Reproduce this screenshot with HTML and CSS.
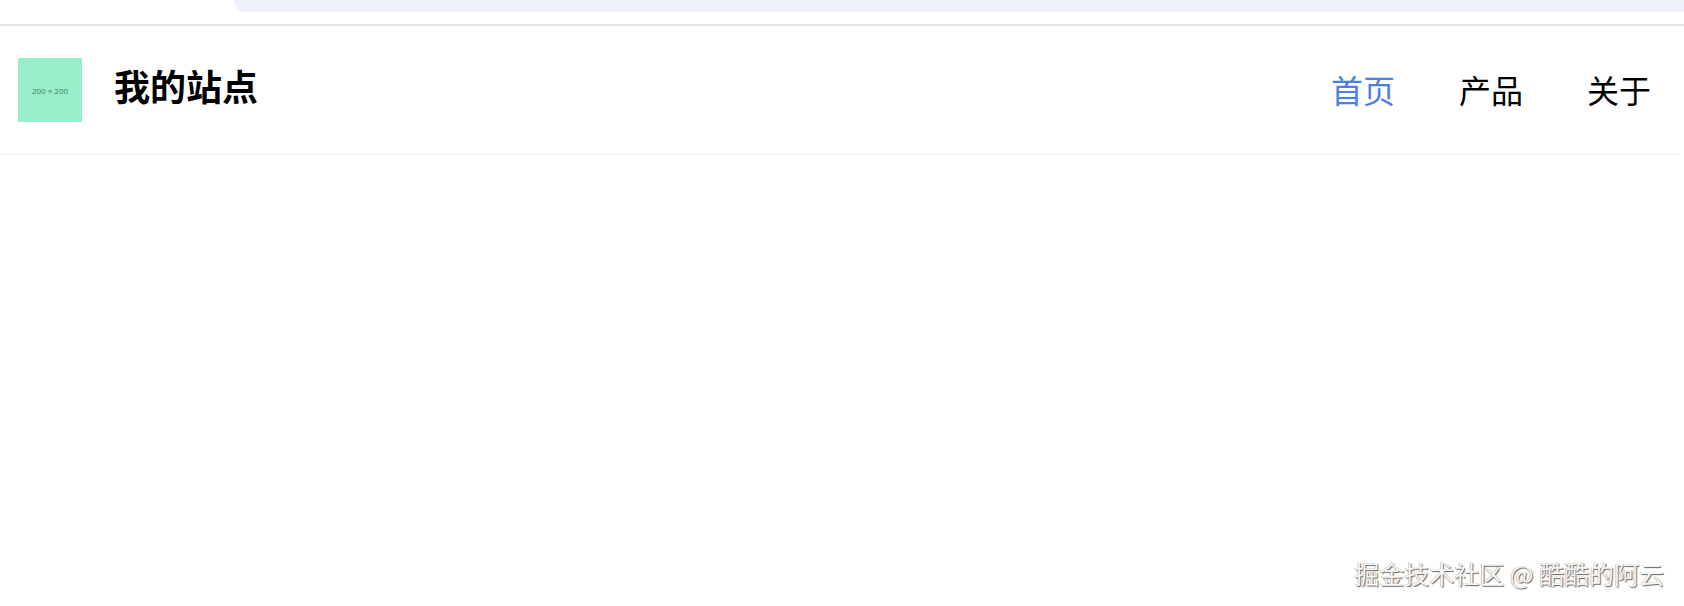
FILE: index.html
```html
<!DOCTYPE html>
<html lang="zh-CN">
<head>
<meta charset="utf-8">
<title>我的站点</title>
<link rel="stylesheet" href="styles.css">
</head>
<body>
<div class="topstrip"><div class="topbar"></div></div>
<header class="site-header">
  <div class="brand">
    <div class="logo"><span>200 × 200</span></div>
    <h1 class="title">我的站点</h1>
  </div>
  <nav class="nav">
    <a class="nav-item active" href="#">首页</a>
    <a class="nav-item" href="#">产品</a>
    <a class="nav-item" href="#">关于</a>
  </nav>
</header>
<main class="content"></main>
<div class="watermark">掘金技术社区 @ 酷酷的阿云</div>
</body>
</html>
```
FILE: styles.css
```css
html, body {
  margin: 0;
  padding: 0;
  background: #ffffff;
  font-family: "Noto Sans CJK SC", "Noto Sans", sans-serif;
  height: 100%;
  overflow: hidden;
}
body {
  position: relative;
}
.topstrip {
  height: 24px;
  border-bottom: 2px solid #e3e3e3;
  display: flex;
  justify-content: flex-end;
}
.topbar {
  width: calc(100% - 234px);
  height: 12px;
  background: #eef1f9;
  border-bottom-left-radius: 16px;
}
.site-header {
  display: flex;
  align-items: center;
  justify-content: space-between;
  margin-right: 4px;
  padding: 32px 29px 32px 18px;
  border-bottom: 1px solid #f1f1f1;
}
.brand {
  display: flex;
  align-items: center;
  gap: 32px;
}
.logo {
  width: 64px;
  height: 64px;
  background: #98eec8;
  display: flex;
  align-items: center;
  justify-content: center;
}
.logo span {
  font-family: "Open Sans", "Liberation Sans", sans-serif;
  font-size: 8px;
  color: #447f63;
}
.title {
  margin: 0 0 8px 0;
  font-size: 36px;
  font-weight: 700;
  color: #000;
  line-height: 1.2;
}
.nav {
  display: flex;
  gap: 64px;
}
.nav-item {
  font-size: 32px;
  color: #000;
  text-decoration: none;
  line-height: 1.3;
}
.nav-item.active {
  color: #4a80e4;
}
.content {
  height: 400px;
}
.watermark {
  position: absolute;
  right: 20px;
  bottom: 15px;
  font-size: 25px;
  color: #f6f6f6;
  text-shadow: 1px 1px 1px #666, -0.5px -0.5px 0 #aaa;
}
```
